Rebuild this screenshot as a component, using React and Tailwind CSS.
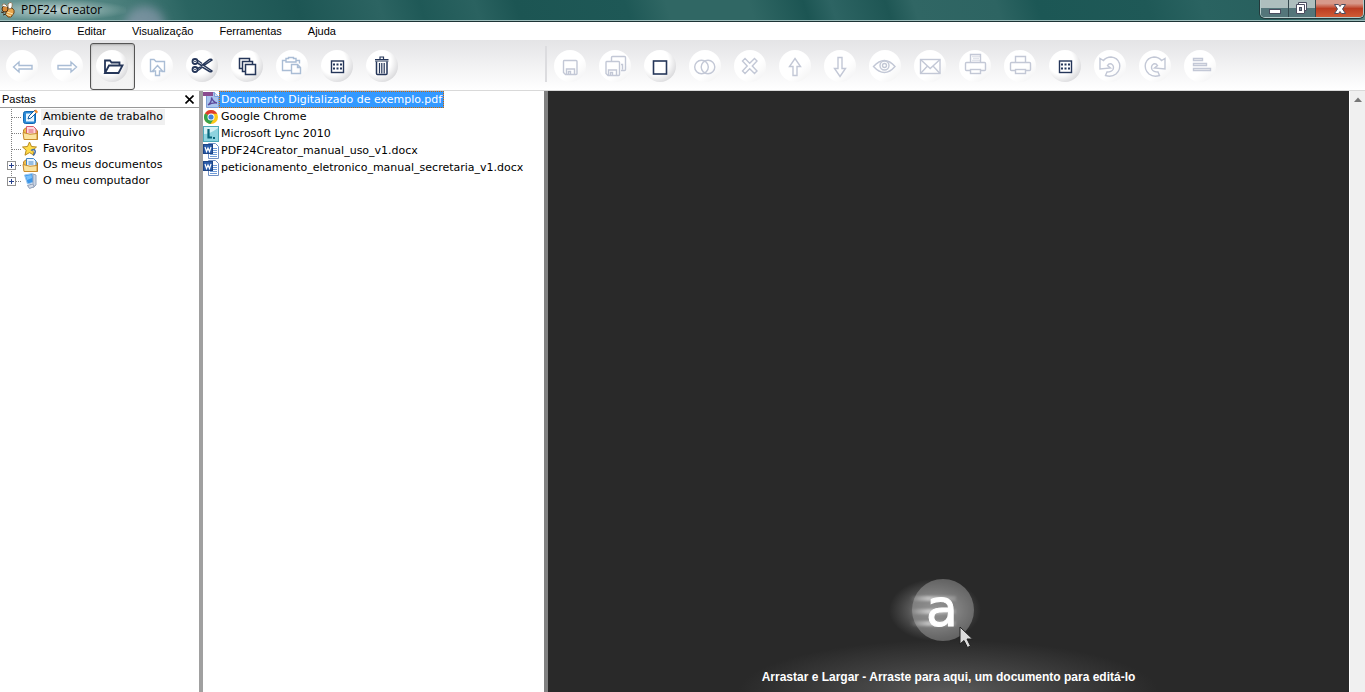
import React from "react";
import clsx from "clsx";

const menus = ["Ficheiro", "Editar", "Visualização", "Ferramentas", "Ajuda"];

const gridIcon = (
  <>
    <rect x="10.5" y="11" width="12" height="11.5" strokeWidth="1.4" />
    <path d="M12 14.500h9.500M12 18.500h9.500" strokeDasharray="2 1.500" strokeWidth="2" />
  </>
);

const icons = {
  back: <path d="M7.500 17l5.500-5v3.500h13v3.500H13v3z" />,
  forward: <path d="M25.500 17l-5.500-5v3.500H7v3.500h13v3z" />,
  open: (
    <path
      d="M9 23V10.500h5l1.500 2h8v3M9 23l4-7.500h13.500l-4 7.500z"
      strokeWidth="1.800"
    />
  ),
  folderUp: (
    <path d="M13 21.500H9.500V9.500h3.500l2 2h8.500v10h-3M16.500 15.500l5 5.500h-3v4.500h-4V21h-3z" />
  ),
  cut: (
    <>
      <circle cx="9" cy="11.500" r="2.500" strokeWidth="1.800" />
      <circle cx="9" cy="19.500" r="2.500" strokeWidth="1.800" />
      <path d="M9 11v1M9 19v1" strokeWidth="1.500" />
      <path
        d="M11.500 13l4 2.500 8-6q2-.8 2.500.5l-8 5.500 8 5.500q-.5 1.300-2.500.5l-8-5-4 2"
        strokeWidth="1.500"
      />
      <path d="M12 10.500l4 3M12 20.500l4-3" strokeWidth="1.200" />
    </>
  ),
  copy: (
    <>
      <path d="M11.500 18.500h-3V8.500h10v3M14.500 21.500h-3v-10h10v3" strokeWidth="1.500" />
      <rect x="14.500" y="14.500" width="10" height="10" strokeWidth="1.500" />
    </>
  ),
  paste: (
    <>
      <path d="M15 20.500H6.500v-10H10V8.500h2.500V7.500h5v1H20v2h3.500v3M10 10.500v1.500h10v-1.500" />
      <path d="M15.500 14.500h6l3 3v6h-9zM21.500 14.500v3h3" />
    </>
  ),
  grid: gridIcon,
  trash: (
    <>
      <path d="M9 9.500h13.500M9 11h13.500M14 9V7h3.500v2" strokeWidth="1.200" />
      <path d="M10.500 11.500v12q0 1 1 1h8.500q1 0 1-1v-12" strokeWidth="1.500" />
      <path d="M13.500 13v10.500M15.800 13v10.500M18.200 13v10.500" strokeWidth="1.200" />
    </>
  ),
  save: (
    <>
      <path d="M10 10.500h12q1 0 1 1v12q0 1-1 1H11.500l-2-2v-11q0-1 .5-1z" />
      <path d="M12.500 24v-5h8v5M14.500 24v-2.500h2V24" />
    </>
  ),
  saveAll: (
    <>
      <path d="M12.500 11V7.500q0-1 1-1h12q1 0 1 1v12q0 1-1 1H22M22 14.500h1.500v5" />
      <path d="M7.500 11.500h12q1 0 1 1v12q0 1-1 1H9l-2-2v-11q0-1 .5-1z" />
      <path d="M9.500 25v-5h8v5M11.500 25v-2.500h2V25" />
    </>
  ),
  square: <rect x="9.500" y="11" width="13" height="13" strokeWidth="1.600" />,
  merge: (
    <>
      <circle cx="12.500" cy="17" r="6.800" />
      <circle cx="19" cy="17" r="6.800" />
    </>
  ),
  remove: (
    <path d="M8.500 11l2.500-2.500 4.700 4.800L20.500 8.500 23 11l-4.700 5 4.700 5-2.500 2.500-4.800-4.800-4.700 4.800L8.500 21l4.700-5z" />
  ),
  up: <path d="M16 8.500l5.500 8h-3.500v9h-4v-9h-3.500z" />,
  down: <path d="M16 26.500l5.500-8h-3.500v-11h-4v11h-3.500z" />,
  view: (
    <>
      <path d="M4.500 16.500q11-12 21.500 0-10.500 12-21.500 0z" />
      <circle cx="15.500" cy="15.500" r="4.500" />
      <circle cx="15.500" cy="15.500" r="2" />
    </>
  ),
  mail: (
    <>
      <rect x="6.500" y="9.500" width="19.500" height="14" />
      <path d="M6.500 9.500l9.700 9 9.800-9M6.500 23.500l7-7.500M26 23.500l-7-7.500" />
    </>
  ),
  fax: (
    <>
      <path d="M11.500 12.500v-8h10v8M11.500 20.500H7.500q-1 0-1-1v-6q0-1 1-1h18q1 0 1 1v6q0 1-1 1h-4" />
      <rect x="11.500" y="19.500" width="10" height="4" />
      <path d="M13.500 6.500h7M14.500 8.500h6M13.500 10.500h7" strokeDasharray="1 1" />
    </>
  ),
  print: (
    <>
      <path d="M11.500 12.500v-6h10v6M11.500 20.500H7.500q-1 0-1-1v-6q0-1 1-1h18q1 0 1 1v6q0 1-1 1h-4" />
      <rect x="11.500" y="19.500" width="10" height="4" />
    </>
  ),
  undo: (
    <path d="M6 8.500V19l10.500-1-3-2.500q1.500-2.500 4-1.500 3 2 1.500 5.500-1.500 2.500-6 2.500l-1.500 3.500q6 2 10.500-1.500 5-4.500 3.500-10.500-2-6-8.500-6.500-4.500 0-7.500 3.500z" />
  ),
  redo: (
    <path d="M26 8.500V19l-10.500-1 3-2.500q-1.500-2.500-4-1.500-3 2-1.500 5.500 1.500 2.500 6 2.500l1.500 3.500q-6 2-10.500-1.500-5-4.500-3.500-10.500 2-6 8.500-6.500 4.500 0 7.500 3.500z" />
  ),
  align: <path d="M9.500 8.500h9v2h-9zM9.500 13.500h13v2h-13zM9.500 18.500h17v2h-17z" />,
};

const fileTools = [
  { icon: "back", label: "Voltar", off: true },
  { icon: "forward", label: "Avançar", off: true },
  { icon: "open", label: "Pastas", active: true },
  { icon: "folderUp", label: "Pasta superior", off: true },
  { icon: "cut", label: "Cortar" },
  { icon: "copy", label: "Copiar" },
  { icon: "paste", label: "Colar", off: true },
  { icon: "grid", label: "Vista" },
  { icon: "trash", label: "Eliminar" },
];

const docTools = [
  { icon: "save", label: "Guardar", off: true },
  { icon: "saveAll", label: "Guardar tudo", off: true },
  { icon: "square", label: "Novo" },
  { icon: "merge", label: "Juntar", off: true },
  { icon: "remove", label: "Remover", off: true },
  { icon: "up", label: "Para cima", off: true },
  { icon: "down", label: "Para baixo", off: true },
  { icon: "view", label: "Ver", off: true },
  { icon: "mail", label: "Enviar", off: true },
  { icon: "fax", label: "Fax", off: true },
  { icon: "print", label: "Imprimir", off: true },
  { icon: "grid", label: "Vista das páginas" },
  { icon: "undo", label: "Rodar à esquerda", off: true },
  { icon: "redo", label: "Rodar à direita", off: true },
  { icon: "align", label: "Ordenar", off: true },
];

const ToolButton = ({ icon, label, off, active, gray }) => (
  <button
    type="button"
    aria-label={label}
    disabled={off}
    className={clsx(
      "flex w-[45px] h-[47px] shrink-0 items-start rounded-[3px] border pl-[5px] pt-1.5",
      active
        ? "border-[#555] bg-linear-to-b from-[#d9d9da] via-[#f0f0f0] to-[#f4f4f4] shadow-[inset_0_1px_2px_#aaa]"
        : "border-transparent"
    )}
  >
    <span
      className={clsx(
        "size-8 rounded-full",
        off
          ? "bg-linear-to-br from-white from-60% to-[#f0f0f1]"
          : "bg-radial-[at_38%_35%] from-white from-45% to-[#bfbfc3]"
      )}
    >
      <svg
        viewBox="0 0 32 32"
        fill="none"
        className={clsx(
          "size-8",
          !off && "stroke-[#253659]",
          off && "stroke-[1.4]",
          off && (gray ? "stroke-[#c3c8d6]" : "stroke-[#aabdd5]")
        )}
      >
        {icons[icon]}
      </svg>
    </span>
  </button>
);

const PageFolder = ({ page, line }) => (
  <>
    <path d="M1.500 5l2-2h9l3 3v8.500h-13z" fill="#f1c24e" stroke="#b87b22" />
    <path d="M4.500 1.500h7l2.500 2.500v8h-9.500z" fill={page} stroke={line} />
    <path d="M6.500 5h5M6.500 7h5" stroke={line} />
    <path d="M1 7.500q7 3 14 1v6H2z" fill="#fbe3a0" stroke="#c98c2b" />
  </>
);

const treeIcons = {
  desktop: (
    <>
      <rect x="1.500" y="2.500" width="12" height="12" rx="2" fill="#2b8ad6" stroke="#1268b3" />
      <path d="M4 4.500h6l2 2v6H4z" fill="#eaf6ff" />
      <path d="M6 10l1-3 6-6 2 2-6 6z" fill="#fff" stroke="#155c9e" />
      <path d="M12 2l2-1.500L16 3l-1.500 1.500z" fill="#f08a2c" />
    </>
  ),
  archive: <PageFolder page="#ffd9dd" line="#d95d6c" />,
  star: (
    <>
      <path
        d="M7.500 1l2 4.500 5 .5-3.700 3.200 1.200 5-4.500-2.600L3 14.200l1.200-5L.500 6l5-.5z"
        fill="#ffdc4a"
        stroke="#b98a1e"
      />
      <path d="M9 9.500q3-2 4 0t-2 5" fill="none" stroke="#4770a8" strokeWidth="1.500" />
    </>
  ),
  documents: <PageFolder page="#e8f4ff" line="#4385c5" />,
  computer: (
    <>
      <path d="M2.500 2l8-1.500 2 8.500-7 2z" fill="#3c96e8" stroke="#9cc7ee" />
      <path d="M4 3l5.500-1 .5 3-5 2z" fill="#79c0fb" />
      <path d="M11 1l3 1v10l-3 2.500z" fill="#cbd5e4" stroke="#93a4bd" />
      <path d="M5.500 12.500l5-1.500 2 2.500-5 2z" fill="#d5dce8" stroke="#8c9bb4" />
    </>
  ),
};

const folders = [
  { name: "Ambiente de trabalho", icon: "desktop", current: true },
  { name: "Arquivo", icon: "archive" },
  { name: "Favoritos", icon: "star" },
  { name: "Os meus documentos", icon: "documents", expandable: true },
  { name: "O meu computador", icon: "computer", expandable: true },
];

const TreeRow = ({ folder, last }) => (
  <li>
    <button type="button" className="flex h-4 w-full items-center text-left">
      <svg viewBox="0 0 22 16" className="w-[22px] h-4 shrink-0" fill="none">
        <path d={last ? "M11.500 0v8" : "M11.500 0v16"} stroke="#808080" strokeDasharray="1 1" />
        <path d="M12 8.500h10" stroke="#808080" strokeDasharray="1 1" />
        {folder.expandable && (
          <>
            <rect x="7.500" y="4.500" width="8" height="8" fill="#fff" stroke="#919191" />
            <path d="M9 8.500h5M11.500 6v5" stroke="#27408b" />
          </>
        )}
      </svg>
      <svg viewBox="0 0 16 16" className="size-4 shrink-0">
        {treeIcons[folder.icon]}
      </svg>
      <span className={clsx("ml-[3px] px-0.5 leading-4", folder.current && "bg-[#f0f0f0]")}>
        {folder.name}
      </span>
    </button>
  </li>
);

const WordIcon = (
  <>
    <path d="M5.500.500h7l3 3v12h-10z" fill="#fff" stroke="#6f8fc4" />
    <path d="M9 5.500h5M9 7.500h5M9 9.500h5M7 11.500h7M7 13.500h7" stroke="#6f9bd8" />
    <rect x=".5" y="1.500" width="9" height="9" fill="#2a5ba8" stroke="#1d4485" />
    <path d="M2 4l1.500 4.500L5 5l1.500 3.500L8 4" fill="none" stroke="#fff" strokeWidth="1.200" />
  </>
);

const fileIcons = {
  pdf: (
    <>
      <path d="M3.500.500h8l4 4v11h-12z" fill="#a9c5ee" stroke="#7c9fd6" />
      <path d="M11.500.500v4h4" fill="#d5e4fa" stroke="#7c9fd6" />
      <rect x="0" y="0" width="10" height="4" fill="#8a4b8f" />
      <path d="M5 13q4-3 3.500-7.500Q10 10 14 11q-5-.500-9 2z" fill="none" stroke="#5b4a9c" strokeWidth="1.300" />
    </>
  ),
  chrome: (
    <>
      <circle cx="8" cy="8" r="7" fill="#fbc918" />
      <path d="M8 8L2 4.400A7 7 0 0 1 14.200 4.700H8z" fill="#de3b2f" />
      <path d="M8 8L2 4.400A7 7 0 0 0 7.400 15L11 9.700z" fill="#35a24b" />
      <circle cx="8" cy="8" r="3.500" fill="#fff" />
      <circle cx="8" cy="8" r="2.600" fill="#3f83dc" />
    </>
  ),
  lync: (
    <>
      <rect x=".5" y=".5" width="15" height="15" fill="#d6f1f5" stroke="#4fa9b8" />
      <path d="M1 15V8q6 0 14-6v13z" fill="#8dd3df" />
      <path d="M5.500 3v8.500H9M10 12h2" fill="none" stroke="#08657a" strokeWidth="2.200" />
    </>
  ),
  word: WordIcon,
};

const files = [
  { name: "Documento Digitalizado de exemplo.pdf", icon: "pdf", selected: true },
  { name: "Google Chrome", icon: "chrome" },
  { name: "Microsoft Lync 2010", icon: "lync" },
  { name: "PDF24Creator_manual_uso_v1.docx", icon: "word" },
  { name: "peticionamento_eletronico_manual_secretaria_v1.docx", icon: "word" },
];

const TitleBar = () => (
  <header className="relative flex h-[22px] items-start justify-between overflow-hidden border-b border-[#1d3336] bg-[linear-gradient(72deg,#6b9896_0%,#4b7f7c_9%,#2a6461_14%,#1d5654_22%,#2c6462_28%,#1f5957_31%,#2a6260_35%,#1c5553_38%,#1e5856_46%,#306764_49%,#306764_55%,#1c5553_59%,#2d6463_61%,#1e5654_65%,#306664_67%,#2d6462_73%,#1c5755_76%,#1f5957_84%,#2a6361_88%,#28605e_93%,#5b8b89_100%)] shadow-[inset_0_-1px_0_#9dbdbc]">
    <div className="flex h-5 items-center gap-[5px] bg-radial-[at_45%_50%] from-white/60 to-transparent to-75% pr-6">
      <svg viewBox="0 0 16 18" className="w-4 h-[18px]">
        <path d="M6 8l6-1q3 2 2 5l-3 4q-3 1-5-2z" fill="#e8a64c" stroke="#6a4217" />
        <path d="M7 11l6 2M6 13l5 2" stroke="#fbe1a8" />
        <circle cx="5" cy="8" r="3" fill="#d88c3a" stroke="#4d3014" />
        <path d="M2 5q0-3 3-2l3 3M8 6q-1-4 2-4.500T12 6q-1 2-3 2z" fill="#fff" stroke="#8c7a5e" />
        <path d="M1 11l3 1M3 14l3-1" stroke="#3a2816" />
      </svg>
      <h1 className="font-['Open_Sans',sans-serif] text-xs leading-5 text-black">PDF24 Creator</h1>
    </div>
    <span className="absolute left-[125px] top-1.5 size-10 rounded-full bg-[#a9a9c6]/50 blur-[5px]" />
    <div className="mr-px flex h-[18px] overflow-hidden rounded-b-[5px] border border-t-0 border-[#b4cbca] ring-1 ring-[#23393b]">
      <button
        type="button"
        aria-label="Minimizar"
        className="flex w-7 items-center justify-center border-r border-[#35494e] bg-linear-to-b from-[#aebfbe] from-45% to-[#54767a] to-50%"
      >
        <svg viewBox="0 0 14 14" className="size-3.5">
          <rect x="1.500" y="7.500" width="11" height="4" fill="#fff" stroke="#4b4e60" />
        </svg>
      </button>
      <button
        type="button"
        aria-label="Restaurar"
        className="flex w-[27px] items-center justify-center border-r border-[#35494e] bg-linear-to-b from-[#aebfbe] from-45% to-[#54767a] to-50%"
      >
        <svg viewBox="0 0 14 14" className="size-3.5">
          <path d="M3.500.500h8v8h-8z" fill="#fff" stroke="#4b4e60" />
          <path d="M1.500 2.500h8v9h-8z" fill="#fff" stroke="#4b4e60" />
          <rect x="4.500" y="5.500" width="2" height="3" fill="#7b9598" stroke="#4b4e60" />
        </svg>
      </button>
      <button
        type="button"
        aria-label="Fechar"
        className="flex w-[47px] items-center justify-center bg-linear-to-b from-[#d79a8b] from-20% via-[#bb3d22] via-50% to-[#cf5b35]"
      >
        <svg viewBox="0 0 14 14" className="size-3.5">
          <path
            d="M1.500 2.500h4L7 4.500l1.500-2h4L9.500 7l3 4.500h-4L7 9.500l-1.500 2h-4l3-4.500z"
            fill="#fff"
            stroke="#4b4e60"
          />
        </svg>
      </button>
    </div>
  </header>
);

const DropArea = () => (
  <section className="flex min-w-0 flex-1 flex-col items-center justify-end bg-[#292929] bg-[radial-gradient(ellipse_210px_52px_at_50%_100%,#5a5a5a,#454545_40%,#292929)]">
    <svg viewBox="0 0 120 84" className="w-[120px] h-[84px]">
      <defs>
        <radialGradient id="trail">
          <stop offset="0" stopColor="#aaa" stopOpacity=".7" />
          <stop offset=".5" stopColor="#888" stopOpacity=".55" />
          <stop offset="1" stopColor="#777" stopOpacity="0" />
        </radialGradient>
        <linearGradient id="streak" x1="0" x2="1">
          <stop offset="0" stopColor="#fff" stopOpacity="0" />
          <stop offset=".4" stopColor="#fff" stopOpacity=".5" />
          <stop offset="1" stopColor="#fff" stopOpacity=".15" />
        </linearGradient>
        <filter id="soft">
          <feGaussianBlur stdDeviation="1" />
        </filter>
      </defs>
      <rect x="0" y="3" width="92" height="62" rx="31" fill="url(#trail)" />
      <circle cx="54" cy="34" r="31" fill="#aaa" fillOpacity=".45" />
      <path
        d="M21 20h46v5H21zM21 33h46v5H21zM21 45h46v5H21z"
        fill="url(#streak)"
        filter="url(#soft)"
      />
      <text
        x="53"
        y="50"
        textAnchor="middle"
        fill="#fff"
        stroke="#fff"
        strokeWidth="1"
        className="font-['DejaVu_Sans',sans-serif] text-[52px]"
      >
        a
      </text>
      <path d="M71 51v17l4-3.500 3.500 7 3-1.500-3.500-7h5.500z" fill="#ddd" stroke="#222" />
    </svg>
    <p className="flex h-8 items-center justify-center pt-0.5 text-center font-['Liberation_Sans',sans-serif] text-xs font-bold text-white">
      Arrastar e Largar - Arraste para aqui, um documento para editá-lo
    </p>
  </section>
);

const App = () => {
  return (
    <div className="flex min-h-screen flex-col bg-white font-['Liberation_Sans',sans-serif] text-[11px] text-black">
      <TitleBar />

      <nav className="flex h-[18px] items-center gap-0.5 bg-white">
        {menus.map((menu) => (
          <button key={menu} type="button" className="px-3 leading-[18px]">
            {menu}
          </button>
        ))}
      </nav>

      <div className="flex h-[51px] items-end border-b border-[#d9d9d9] bg-linear-to-b from-[#e4e4e6] to-white">
        <div className="flex w-[545px] shrink-0">
          {fileTools.map((tool) => (
            <ToolButton key={tool.label} {...tool} />
          ))}
        </div>
        <div className="mb-2 mr-px h-9 w-0.5 shrink-0 bg-[#dcdcdf]" />
        <div className="flex">
          {docTools.map((tool) => (
            <ToolButton key={tool.label} {...tool} gray />
          ))}
        </div>
      </div>

      <main className="flex flex-1">
        <aside className="w-[199px] shrink-0">
          <div className="flex h-[17px] items-center justify-between border-b border-[#999] pl-0.5 pr-[5px]">
            <h2>Pastas</h2>
            <button type="button" aria-label="Fechar pastas">
              <svg viewBox="0 0 9 9" className="size-[9px]">
                <path d="M.5.500l8 8M8.500.500l-8 8" stroke="#000" strokeWidth="1.600" />
              </svg>
            </button>
          </div>
          <ul className="pt-px font-['DejaVu_Sans',sans-serif]">
            {folders.map((folder, i) => (
              <TreeRow key={folder.name} folder={folder} last={i === folders.length - 1} />
            ))}
          </ul>
        </aside>

        <div className="w-1 shrink-0 bg-[#a0a0a0]" />

        <ul className="w-[341px] shrink-0 font-['DejaVu_Sans',sans-serif]">
          {files.map((file) => (
            <li key={file.name}>
              <button type="button" className="flex h-[17px] items-center whitespace-nowrap">
                <svg viewBox="0 0 16 16" className="size-4 shrink-0">
                  {fileIcons[file.icon]}
                </svg>
                <span
                  className={clsx(
                    "px-0.5 leading-[17px]",
                    file.selected &&
                      "bg-[#3399ff] text-white outline-1 -outline-offset-1 outline-dotted outline-[#cc6600]"
                  )}
                >
                  {file.name}
                </span>
              </button>
            </li>
          ))}
        </ul>

        <div className="w-1 shrink-0 bg-[#808080]" />

        <DropArea />

        <div className="flex w-4 shrink-0 justify-center border-l border-white bg-[#f0f0f0] pt-1.5">
          <svg viewBox="0 0 8 5" className="w-2 h-[5px]">
            <path d="M0 5l4-4.500L8 5z" fill="#777" />
          </svg>
        </div>
      </main>
    </div>
  );
};

export default App;
